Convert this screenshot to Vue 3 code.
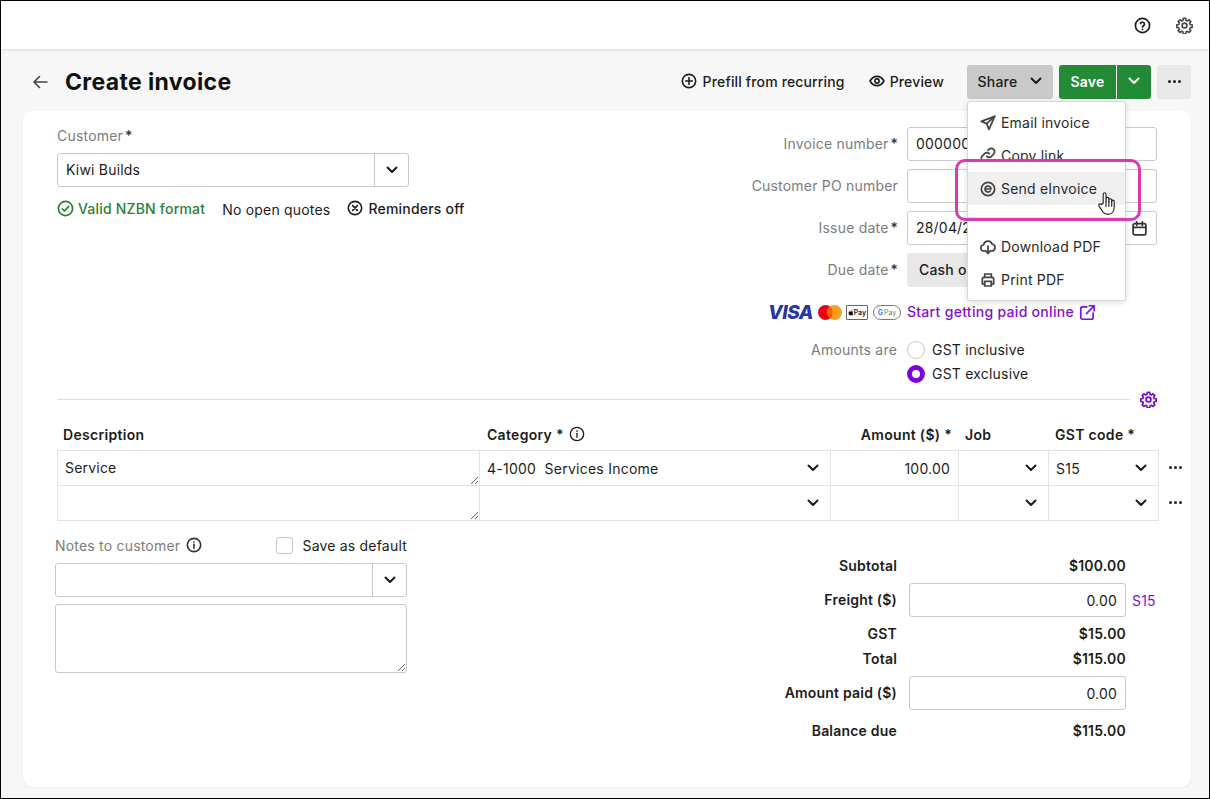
<template>
  <div class="screen">
    <header class="topbar">
      <svg class="top-icon" viewBox="0 0 24 24"><circle cx="12" cy="12" r="10" /><path d="M9.2 9.2a2.9 2.9 0 0 1 5.6.9c0 1.9-2.8 2.5-2.8 4" /><circle class="dot" cx="12" cy="17.4" r="1.3" /></svg>
      <svg class="top-icon gear-gray" viewBox="0 0 24 24"><path :d="gearPath" /><circle cx="12" cy="12" r="3.4" /></svg>
    </header>

    <div class="page-head">
      <svg class="back" viewBox="0 0 16 16"><path d="M15 8H2M7.5 2.5 2 8l5.5 5.5" /></svg>
      <h1>Create invoice</h1>
      <div class="actions">
        <span class="link-action prefill">
          <svg viewBox="0 0 24 24"><circle cx="12" cy="12" r="10" /><path d="M12 7v10M7 12h10" /></svg>
          Prefill from recurring
        </span>
        <span class="link-action preview">
          <svg viewBox="0 0 24 24"><path d="M1.5 12S5.5 5 12 5s10.5 7 10.5 7-4 7-10.5 7S1.5 12 1.5 12Z" /><circle cx="12" cy="12" r="3.2" /></svg>
          Preview
        </span>
        <div class="share-wrap">
          <button class="btn share">
            Share
            <svg class="chev" viewBox="0 0 12 8"><path d="m1.5 1.5 4.5 4.5 4.5-4.5" /></svg>
          </button>
          <!-- 공유 메뉴 -->
          <div class="menu">
            <div v-for="item in menuItems" :key="item.label" :class="['menu-item', item.cls]">
              <svg viewBox="0 0 24 24"><path v-for="d in item.paths" :key="d" :d="d" /></svg>
              <span>{{ item.label }}</span>
            </div>
          </div>
          <div class="highlight"></div>
          <svg class="hand" viewBox="0 0 20 26">
            <path d="M6.5 13V3.2a1.5 1.5 0 0 1 3 0V11l.2-3a1.4 1.4 0 0 1 2.8 0v3.5l.2-2.5a1.4 1.4 0 0 1 2.7.2v2.3l.2-1.2a1.3 1.3 0 0 1 2.5.3V17c0 4.5-2.5 7.5-6.5 7.5-3.3 0-5-1.5-6.5-4.3L2 15.5c-.8-1.7 1.5-2.8 2.6-1.4Z" />
            <path d="M9.5 11v5M12.5 11v5M15.5 11v5" />
          </svg>
        </div>
        <div class="save-group">
          <button class="btn save">Save</button>
          <button class="btn save-caret">
            <svg class="chev" viewBox="0 0 12 8"><path d="m1.5 1.5 4.5 4.5 4.5-4.5" /></svg>
          </button>
        </div>
        <button class="btn more"><i></i><i></i><i></i></button>
      </div>
    </div>

    <main class="card">
      <section class="top-form">
        <div class="customer">
          <div class="field-label">Customer<b>*</b></div>
          <div class="combo">
            <span>Kiwi Builds</span>
            <div class="combo-arrow"><svg class="chev" viewBox="0 0 12 8"><path d="m1.5 1.5 4.5 4.5 4.5-4.5" /></svg></div>
          </div>
          <div class="status-row">
            <span class="status valid">
              <svg viewBox="0 0 24 24"><circle cx="12" cy="12" r="10" /><path d="m7.5 12.5 3 3 6-6.5" /></svg>
              Valid NZBN format
            </span>
            <span class="status quotes">No open quotes</span>
            <span class="status reminders">
              <svg viewBox="0 0 24 24"><circle cx="12" cy="12" r="10" /><path d="m8.5 8.5 7 7M15.5 8.5l-7 7" /></svg>
              Reminders off
            </span>
          </div>
        </div>

        <div class="details">
          <div class="detail-row">
            <label>Invoice number<b>*</b></label>
            <div class="box">00000001</div>
          </div>
          <div class="detail-row">
            <label>Customer PO number</label>
            <div class="box"></div>
          </div>
          <div class="detail-row">
            <label>Issue date<b>*</b></label>
            <div class="box date">
              28/04/2025
              <svg viewBox="0 0 24 24"><rect x="3" y="5" width="18" height="16" rx="2.5" /><path d="M3 10.5h18M8 2.5v5M16 2.5v5" /></svg>
            </div>
          </div>
          <div class="detail-row">
            <label>Due date<b>*</b></label>
            <div class="due">Cash on delivery</div>
          </div>
          <div class="pay-row">
            <span class="visa">VISA</span>
            <svg class="mc" viewBox="0 0 24 15"><circle cx="7.5" cy="7.5" r="7.5" fill="#eb001b" /><circle cx="16.5" cy="7.5" r="7.5" fill="#f79e1b" /><path d="M12 1.6a7.5 7.5 0 0 1 0 11.8 7.5 7.5 0 0 1 0-11.8Z" fill="#ff5f00" /></svg>
            <span class="apay"><svg viewBox="0 0 10 12"><path d="M7.3 1c.1.9-.7 1.9-1.7 1.9C5.5 2 6.4 1.1 7.3 1ZM8.7 8.9c-.4 1-1.1 2.1-2 2.1-.7 0-.9-.4-1.7-.4s-1 .4-1.7.4C2 11 .8 8.6.8 6.8c0-1.9 1.2-2.9 2.4-2.9.7 0 1.3.5 1.8.5.4 0 1.100-.5 1.900-.5.7 0 1.500.3 2 1.100-1.500.9-1.300 3.100-.2 3.900Z" /></svg>Pay</span>
            <span class="gpay"><em>G</em>Pay</span>
            <a class="paid-link">
              <span>Start getting paid online</span>
              <svg viewBox="0 0 24 24"><path d="M11 4H5a2.5 2.5 0 0 0-2.5 2.5V19A2.5 2.5 0 0 0 5 21.5h12.5A2.5 2.5 0 0 0 20 19v-6M14.5 2.5h7v7M21.5 2.5 10.5 13.5" /></svg>
            </a>
          </div>
          <div class="radio-row amounts">
            <label>Amounts are</label>
            <span class="radio"></span>
            <span>GST inclusive</span>
          </div>
          <div class="radio-row">
            <label></label>
            <span class="radio on"></span>
            <span>GST exclusive</span>
          </div>
        </div>
      </section>

      <div class="divider-row">
        <hr />
        <svg class="purple-gear" viewBox="0 0 24 24"><path :d="gearPath" /><circle cx="12" cy="12" r="3.4" /></svg>
      </div>

      <section class="lines">
        <div class="line-grid line-head">
          <div class="desc-head">Description</div>
          <div class="cat-head">
            Category *
            <svg viewBox="0 0 24 24"><circle cx="12" cy="12" r="10" /><path d="M12 11v6" /><circle class="dot" cx="12" cy="7.5" r="1.3" /></svg>
          </div>
          <div class="amount-head">Amount ($) *</div>
          <div>Job</div>
          <div>GST code *</div>
        </div>
        <div v-for="(line, i) in lines" :key="i" class="line-grid line-row">
          <div class="cell"><textarea :value="line.description"></textarea></div>
          <div class="cell select">
            <span>{{ line.category }}</span>
            <svg class="chev" viewBox="0 0 12 8"><path d="m1.5 1.5 4.5 4.5 4.5-4.5" /></svg>
          </div>
          <div class="cell amount">{{ line.amount }}</div>
          <div class="cell select">
            <span></span>
            <svg class="chev" viewBox="0 0 12 8"><path d="m1.5 1.5 4.5 4.5 4.5-4.5" /></svg>
          </div>
          <div class="cell select">
            <span>{{ line.code }}</span>
            <svg class="chev" viewBox="0 0 12 8"><path d="m1.5 1.5 4.5 4.5 4.5-4.5" /></svg>
          </div>
          <div class="row-more"><i></i><i></i><i></i></div>
        </div>
      </section>

      <section class="bottom">
        <div class="notes">
          <div class="notes-head">
            <span class="notes-label">
              Notes to customer
              <svg viewBox="0 0 24 24"><circle cx="12" cy="12" r="10" /><path d="M12 11v6" /><circle class="dot" cx="12" cy="7.5" r="1.3" /></svg>
            </span>
            <span class="save-default"><span class="check"></span>Save as default</span>
          </div>
          <div class="combo">
            <span></span>
            <div class="combo-arrow"><svg class="chev" viewBox="0 0 12 8"><path d="m1.5 1.5 4.5 4.5 4.5-4.5" /></svg></div>
          </div>
          <textarea class="notes-text"></textarea>
        </div>

        <div class="totals">
          <div v-for="row in totals" :key="row.label" :class="['total-row', row.cls]">
            <span class="total-label">{{ row.label }}</span>
            <div v-if="row.input" class="total-input">{{ row.value }}</div>
            <span v-else class="total-value">{{ row.value }}</span>
            <span class="total-code">{{ row.code }}</span>
          </div>
        </div>
      </section>
    </main>
  </div>
</template>

<script setup>
const gearPath =
  'M10.3 2h3.4l.6 2.9 1.7.7 2.5-1.6 2.4 2.4-1.6 2.5.7 1.7 2.9.6v3.4l-2.9.6-.7 1.7 1.6 2.5-2.4 2.4-2.5-1.6-1.7.7-.6 2.9h-3.4l-.6-2.9-1.7-.7-2.5 1.6-2.4-2.4 1.6-2.5-.7-1.7-2.9-.6v-3.4l2.9-.6.7-1.7-1.6-2.5 2.4-2.4 2.5 1.6 1.7-.7Z'

const menuItems = [
  { label: 'Email invoice', paths: ['M22 2 2 9.5l8 3.5 3.5 8.5Z', 'M22 2 10 13'] },
  {
    label: 'Copy link',
    cls: 'clipped',
    paths: ['M10 14a5 5 0 0 0 7.1 0l3.3-3.3a5 5 0 0 0-7.1-7.1L12 5', 'M14 10a5 5 0 0 0-7.1 0l-3.3 3.3a5 5 0 0 0 7.1 7.1L12 19'],
  },
  {
    label: 'Send eInvoice',
    cls: 'hovered',
    paths: ['M22 12a10 10 0 1 1-20 0 10 10 0 0 1 20 0Z', 'M7.5 12h9a4.5 4.5 0 1 0-1.3 3.2'],
  },
  {
    label: 'Download PDF',
    cls: 'after-divider',
    paths: ['M7 18H6a4.5 4.5 0 0 1-.6-9A6.5 6.5 0 0 1 18 7.5 5.3 5.3 0 0 1 18 18h-1', 'M12 10.5V21M8 17.5l4 4 4-4'],
  },
  {
    label: 'Print PDF',
    paths: ['M7 8V3h10v5', 'M7 18H3.5v-7.5A2.5 2.5 0 0 1 6 8h12a2.5 2.5 0 0 1 2.5 2.5V18H17', 'M7 14h10v7H7Z'],
  },
]

const lines = [
  { description: 'Service', category: '4-1000\u00a0\u00a0Services Income', amount: '100.00', code: 'S15' },
  { description: '', category: '', amount: '', code: '' },
]

const totals = [
  { label: 'Subtotal', value: '$100.00' },
  { label: 'Freight ($)', value: '0.00', input: true, code: 'S15', cls: 'with-input' },
  { label: 'GST', value: '$15.00' },
  { label: 'Total', value: '$115.00', cls: 'tight' },
  { label: 'Amount paid ($)', value: '0.00', input: true, cls: 'with-input' },
  { label: 'Balance due', value: '$115.00', cls: 'balance' },
]
</script>

<style>
html,
body {
  margin: 0;
  background: #fff;
}
</style>

<style scoped>
.screen {
  width: 1210px;
  height: 799px;
  box-sizing: border-box;
  border: 1px solid #000;
  background: #f7f7f7;
  overflow: hidden;
  font-family: Inter, 'Liberation Sans', sans-serif;
  font-size: 14px;
  letter-spacing: 0.2px;
  color: #1c1c1c;
  display: flex;
  flex-direction: column;
}

svg {
  fill: none;
  stroke: currentColor;
  stroke-width: 2.4;
  stroke-linecap: round;
  stroke-linejoin: round;
  flex: none;
}

svg .dot {
  fill: currentColor;
  stroke: none;
}

.chev {
  width: 12px;
  height: 8px;
  stroke-width: 2;
  color: #1c1c1c;
}

/* 상단 바 */
.topbar {
  height: 48px;
  flex: none;
  background: #fff;
  box-shadow: 0 1px 2px rgba(0, 0, 0, 0.12);
  display: flex;
  align-items: center;
  justify-content: flex-end;
  gap: 25px;
  padding: 0 16px 0 0;
  position: relative;
}

.top-icon {
  width: 17px;
  height: 17px;
  color: #1c1c1c;
}

.gear-gray {
  color: #4c4c4c;
}

.page-head {
  height: 62px;
  box-sizing: border-box;
  flex: none;
  display: flex;
  align-items: center;
  padding: 4px 18px 0 31px;
}

.back {
  width: 16px;
  height: 16px;
  color: #444;
  stroke-width: 1.6;
}

h1 {
  margin: 0 0 0 17px;
  font-size: 23px;
  font-weight: 700;
  color: #111;
  letter-spacing: 0.35px;
}

.actions {
  margin-left: auto;
  display: flex;
  align-items: center;
}

.link-action {
  display: inline-flex;
  align-items: center;
  gap: 6px;
  font-weight: 500;
  letter-spacing: 0.15px;
  white-space: nowrap;
  padding-bottom: 2px;
}

.link-action svg {
  width: 16px;
  height: 16px;
}

.preview {
  margin-left: 24px;
  margin-right: 23px;
  gap: 5px;
}

.btn {
  height: 34px;
  border: 0;
  border-radius: 3px;
  padding: 0 0 2px;
  font: inherit;
  font-weight: 500;
  letter-spacing: inherit;
  color: inherit;
  display: inline-flex;
  align-items: center;
  justify-content: center;
}

.share-wrap {
  position: relative;
}

.share {
  width: 86px;
  background: #c9c9c9;
  gap: 13px;
}

.save-group {
  display: flex;
  margin-left: 6px;
  gap: 1px;
}

.save {
  width: 57px;
  background: #238a36;
  color: #fff;
  font-weight: 600;
  border-radius: 3px 0 0 3px;
}

.save-caret {
  width: 34px;
  background: #238a36;
  border-radius: 0 3px 3px 0;
}

.save-caret .chev {
  color: #fff;
}

.more {
  width: 34px;
  margin-left: 6px;
  background: #e8e8e8;
  gap: 2px;
}

.more i,
.row-more i {
  width: 3px;
  height: 3px;
  border-radius: 50%;
  background: #222;
}

/* 공유 드롭다운 */
.menu {
  position: absolute;
  top: 36px;
  left: 0;
  width: 159px;
  height: 200px;
  box-sizing: border-box;
  padding-top: 4px;
  background: #fff;
  border: 1px solid #d6d6d6;
  border-radius: 3px;
  box-shadow: 0 2px 6px rgba(0, 0, 0, 0.12);
  z-index: 5;
}

.menu-item {
  height: 33px;
  display: flex;
  align-items: center;
  gap: 5px;
  padding-left: 12px;
  white-space: nowrap;
  color: #2a2a2a;
}

.menu-item svg {
  width: 16px;
  height: 16px;
  color: #444;
  stroke-width: 2.6;
}

.menu-item.clipped {
  overflow: hidden;
  height: 22px;
  align-items: flex-start;
  margin-bottom: 11px;
  padding-top: 8px;
  box-sizing: border-box;
}

.menu-item.hovered {
  background: #f0f0f0;
}

.menu-item.after-divider {
  margin-top: 25px;
  position: relative;
}

.menu-item.after-divider::before {
  content: '';
  position: absolute;
  left: 0;
  right: 0;
  top: -13px;
  border-top: 1px solid #e6e6e6;
}

.highlight {
  position: absolute;
  top: 94px;
  left: -12px;
  width: 186px;
  height: 62px;
  box-sizing: border-box;
  border: 3px solid #d63bb0;
  border-radius: 10px;
  z-index: 6;
}

.hand {
  position: absolute;
  top: 126px;
  left: 130px;
  width: 19px;
  height: 25px;
  fill: #fff;
  stroke: #222;
  stroke-width: 1.2;
  z-index: 7;
}

/* 본문 카드 */
.card {
  flex: 1;
  margin: 0 18px 11px 22px;
  padding: 16px 34px 0;
  background: #fff;
  border-radius: 10px;
  box-shadow: 0 1px 3px rgba(0, 0, 0, 0.05);
}

.top-form {
  display: flex;
  justify-content: space-between;
}

.field-label,
.detail-row label,
.radio-row label,
.notes-label {
  color: #7c7c7c;
}

b {
  font-weight: 500;
  color: #333;
  margin-left: 2px;
}

.field-label {
  line-height: 18px;
  margin-bottom: 8px;
}

.customer {
  width: 352px;
}

.combo {
  height: 34px;
  box-sizing: border-box;
  border: 1px solid #c8c8c8;
  border-radius: 3px;
  display: flex;
  align-items: center;
  justify-content: space-between;
  padding-left: 8px;
}

.combo > span {
  padding-bottom: 2px;
}

.combo-arrow {
  width: 33px;
  height: 100%;
  border-left: 1px solid #c8c8c8;
  display: flex;
  align-items: center;
  justify-content: center;
}

.status-row {
  display: flex;
  align-items: center;
  margin-top: 11px;
  white-space: nowrap;
  height: 20px;
}

.status {
  display: inline-flex;
  align-items: center;
}

.status svg {
  width: 17px;
  height: 17px;
}

.valid {
  color: #2a8136;
  font-weight: 500;
  gap: 4px;
}

.quotes {
  margin-left: 17px;
  padding-top: 2px;
}

.reminders {
  margin-left: 17px;
  gap: 5px;
  font-weight: 500;
}

.reminders svg {
  width: 16px;
  height: 16px;
}

.details {
  width: 440px;
}

.detail-row,
.radio-row {
  display: grid;
  grid-template-columns: 181px 250px;
  column-gap: 9px;
  align-items: center;
}

.detail-row {
  margin-bottom: 8px;
}

.detail-row label,
.radio-row label {
  text-align: right;
  white-space: nowrap;
}

.detail-row label {
  padding-bottom: 2px;
}

.box {
  height: 34px;
  box-sizing: border-box;
  border: 1px solid #c8c8c8;
  border-radius: 3px;
  padding: 0 8px 2px;
  display: flex;
  align-items: center;
  justify-content: space-between;
}

.box svg {
  width: 17px;
  height: 17px;
  color: #333;
  margin-top: 2px;
}

.due {
  width: 140px;
  height: 34px;
  box-sizing: border-box;
  padding: 0 12px 2px;
  border-radius: 3px;
  background: #e8e8e8;
  display: flex;
  align-items: center;
  font-weight: 500;
  white-space: nowrap;
}

.pay-row {
  display: flex;
  align-items: center;
  justify-content: flex-end;
  height: 24px;
  margin-top: 13px;
  margin-right: 61px;
}

.visa {
  font-style: italic;
  font-weight: 800;
  font-size: 19px;
  letter-spacing: -0.5px;
  color: #2733a8;
}

.mc {
  width: 24px;
  height: 15px;
  margin-left: 5px;
  stroke: none;
}

.apay {
  margin-left: 4px;
  width: 22px;
  height: 15px;
  box-sizing: border-box;
  border: 1px solid #666;
  border-radius: 1px;
  font-size: 7px;
  font-weight: 600;
  letter-spacing: 0;
  display: flex;
  align-items: center;
  justify-content: center;
}

.apay svg {
  width: 6px;
  height: 7px;
  fill: #111;
  stroke: none;
}

.gpay {
  margin-left: 5px;
  width: 28px;
  height: 15px;
  box-sizing: border-box;
  border: 1px solid #777;
  border-radius: 8px;
  font-size: 7px;
  letter-spacing: 0;
  color: #777;
  display: flex;
  align-items: center;
  justify-content: center;
  gap: 1px;
}

.gpay em {
  font-style: normal;
  font-weight: 700;
  color: #4285f4;
}

.paid-link {
  margin-left: 6px;
  color: #7f10d4;
  font-weight: 500;
  letter-spacing: 0.3px;
  display: inline-flex;
  align-items: center;
  gap: 5px;
  white-space: nowrap;
}

.paid-link span {
  padding-bottom: 2px;
}

.paid-link svg {
  width: 17px;
  height: 17px;
}

.radio-row {
  grid-template-columns: 181px 18px 1fr;
  column-gap: 8px;
  height: 24px;
}

.radio-row label {
  margin-right: 1px;
  padding-bottom: 2px;
}

.radio-row > span:last-child {
  white-space: nowrap;
  padding-bottom: 2px;
}

.radio-row .radio {
  margin-left: 1px;
}

.amounts {
  margin-top: 14px;
}

.radio {
  width: 18px;
  height: 18px;
  box-sizing: border-box;
  border: 1px solid #c8c8c8;
  border-radius: 50%;
  background: #fff;
}

.radio.on {
  border: 5px solid #7a06de;
}

.divider-row {
  display: flex;
  align-items: center;
  justify-content: space-between;
  margin-top: 1px;
  height: 24px;
}

.divider-row hr {
  flex: 1;
  margin: 0 10px 0 0;
  border: 0;
  border-top: 1px solid #dedede;
}

.purple-gear {
  width: 17px;
  height: 17px;
  color: #7a06de;
}

/* 품목 테이블 */
.lines {
  margin-right: -2px;
  position: relative;
}

.line-grid {
  display: grid;
  grid-template-columns: 422px 351px 128px 90px 110px;
}

.line-head {
  height: 39px;
  align-items: center;
  font-weight: 600;
  letter-spacing: 0.3px;
  padding-top: 7px;
  box-sizing: border-box;
}

.desc-head {
  padding-left: 6px;
}

.cat-head {
  padding-left: 8px;
  display: flex;
  align-items: center;
  gap: 5px;
}

.cat-head svg {
  width: 16px;
  height: 16px;
  stroke-width: 2;
}

.amount-head {
  text-align: right;
  padding-right: 6px;
}

.line-head > div:nth-child(4),
.line-head > div:nth-child(5) {
  padding-left: 7px;
}

.line-row {
  height: 35px;
  position: relative;
}

.cell {
  box-sizing: border-box;
  height: 36px;
  border: 1px solid #e3e3e3;
  margin-right: -1px;
  display: flex;
  align-items: center;
  min-width: 0;
}

.cell textarea {
  display: block;
  width: 100%;
  height: 100%;
  box-sizing: border-box;
  border: 0;
  outline: 0;
  padding: 8px 7px;
  font: inherit;
  letter-spacing: inherit;
  color: inherit;
  background: transparent;
}

.select {
  justify-content: space-between;
  padding: 0 11px 0 7px;
  white-space: nowrap;
  letter-spacing: 0.25px;
}

.amount {
  justify-content: flex-end;
  padding-right: 8px;
}

.row-more {
  position: absolute;
  right: -23px;
  top: 16px;
  display: flex;
  gap: 2px;
}

/* 하단 메모 및 합계 */
.bottom {
  display: flex;
  justify-content: space-between;
  margin-left: -2px;
  margin-top: 16px;
}

.notes {
  width: 352px;
}

.notes-head {
  height: 20px;
  box-sizing: border-box;
  padding-bottom: 2px;
  display: flex;
  align-items: center;
  justify-content: space-between;
  margin-bottom: 7px;
}

.notes-label {
  display: inline-flex;
  align-items: center;
  gap: 6px;
  white-space: nowrap;
}

.notes-label svg {
  width: 16px;
  height: 16px;
  color: #333;
}

.save-default {
  display: inline-flex;
  align-items: center;
  gap: 9px;
}

.check {
  width: 17px;
  height: 17px;
  box-sizing: border-box;
  border: 1px solid #c8c8c8;
  border-radius: 3px;
}

.notes-text {
  display: block;
  width: 100%;
  height: 69px;
  margin-top: 7px;
  box-sizing: border-box;
  border: 1px solid #c8c8c8;
  border-radius: 3px;
  outline: 0;
  font: inherit;
}

.totals {
  margin-top: 18px;
  width: 398px;
}

.total-row {
  display: grid;
  grid-template-columns: 150px 217px 31px;
  height: 24px;
  align-items: center;
  font-weight: 600;
}

.total-label {
  text-align: right;
  padding-right: 12px;
  padding-bottom: 2px;
  white-space: nowrap;
}

.total-value {
  text-align: right;
  padding-bottom: 2px;
}

.total-code {
  color: #7f10d4;
  font-weight: 400;
  padding-left: 6px;
}

.total-input {
  height: 34px;
  box-sizing: border-box;
  border: 1px solid #c8c8c8;
  border-radius: 3px;
  display: flex;
  align-items: center;
  justify-content: flex-end;
  padding-right: 8px;
  font-weight: 400;
}

.with-input {
  height: 34px;
  margin: 5px 0;
}

.tight {
  margin-top: 1px;
}

.balance {
  margin-top: 9px;
}
</style>
